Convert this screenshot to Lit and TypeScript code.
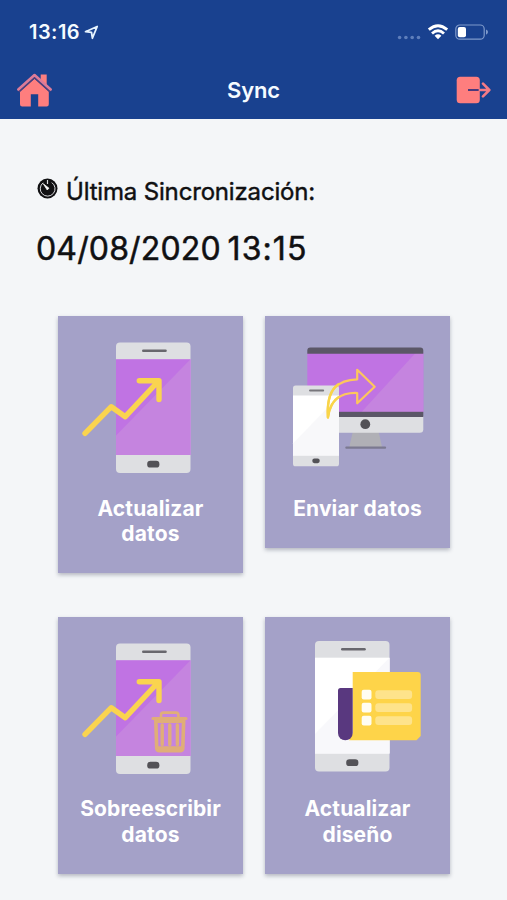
import { LitElement, html, svg, css } from "lit";
import { customElement, property } from "lit/decorators.js";

const phone = (x: number, y: number, screen: string, shade: string) => svg`
  <g transform="translate(${x} ${y})">
    <rect width="74.5" height="130.5" rx="4" fill="#dedfe2"/>
    <rect y="16.7" width="74.5" height="95.8" fill=${screen}/>
    <path d="M74.5 16.7V112.5H0V93Z" fill=${shade}/>
    <path d="M27.3 8.3H49.5" stroke="#68676d" stroke-width="2.6" stroke-linecap="round"/>
    <rect x="31.2" y="118.3" width="12.2" height="6.8" rx="3.2" fill="#535257"/>
  </g>`;

const trend = svg`
  <path d="M27 117.3L53.3 90.7L67.3 100.7L100.5 65M81.3 64.7H101V83.5" fill="none"
    stroke="#fad44f" stroke-width="5.4" stroke-linecap="round" stroke-linejoin="round"/>`;

const pictures: Record<string, unknown> = {
  update: svg`${phone(58, 26.5, "#c073e3", "#c584df")}${trend}`,
  send: svg`
    <path d="M87.7 116H113.7L117 131H84.3Z" fill="#b0b0b6"/>
    <rect x="80.3" y="130.4" width="40.8" height="2.4" rx="1" fill="#7b7990"/>
    <path d="M42.3 100H158.3V113.3Q158.3 116.8 154.8 116.8H42.3Z" fill="#dedfe2"/>
    <rect x="42.3" y="37" width="116" height="59" fill="#c073e3"/>
    <path d="M150.5 37H158.3V96H96.5Z" fill="#c584df"/>
    <path d="M42.3 37.8V34.5Q42.3 31.5 45.3 31.5H155.3Q158.3 31.5 158.3 34.5V37.8Z" fill="#5b5767"/>
    <rect x="42.3" y="95.8" width="116" height="5.2" fill="#5b5767"/>
    <circle cx="100.3" cy="108.2" r="4.9" fill="#535257"/>
    <rect x="28" y="69.5" width="46" height="80.8" rx="2.6" fill="#dedfe2"/>
    <rect x="28" y="79.5" width="46" height="60" fill="#fff"/>
    <path d="M74 80V139.5H28V127.5Z" fill="#f8f8fa"/>
    <path d="M45 74.5H58.2" stroke="#77767b" stroke-width="1.9" stroke-linecap="round"/>
    <rect x="47.3" y="142.4" width="7.4" height="4.8" rx="2.1" fill="#535257"/>
    <path d="M109.7 70.8L92.2 53.8V63.3C74 63.8 61 72 62.9 101.5C65.5 84 75 76.5 92.2 77V87.3Z"
      fill="none" stroke="#fdc65c" stroke-width="2.2" stroke-linejoin="round"/>
    <path d="M74 67.8C65 73.5 61.8 84 62.9 101.5C64.3 91.5 68 84.5 74 80.8" fill="none" stroke="#f9d548" stroke-width="2.4" stroke-linejoin="round"/>`,
  overwrite: svg`${phone(58, 26.5, "#c073e3", "#c584df")}${trend}
    <g fill="none" stroke="#e0ae78" stroke-linecap="round" stroke-linejoin="round">
      <path d="M95 101.5H128" stroke-width="3.2"/>
      <path d="M103 101V98Q103 95.6 105.4 95.6H118Q120.4 95.6 120.4 98V101" stroke-width="2.6"/>
      <path d="M97.8 103L98.7 131Q98.8 133.7 101.5 133.7H122Q124.7 133.7 124.8 131L125.7 103" stroke-width="3.6"/>
      <path d="M104.2 108V127.5M111.8 108V127.5M119.4 108V127.5" stroke-width="3.4"/>
      <path d="M99.5 104.6H124.5M100.5 130.8H123" stroke-width="3"/>
    </g>`,
  design: svg`${phone(50, 24, "#ffffff", "#f8f8fb")}
    <path d="M87.7 55H152.7Q155.7 55 155.7 58V119L151.5 123.3H84L87.7 116Z" fill="#fed449"/>
    <path d="M75.5 71H87.7V116A7.35 7.35 0 0 1 73 116V73.5Q73 71 75.5 71Z" fill="#59387f"/>
    ${[77.7, 90.7, 103.7].map(
      (y) => svg`
        <rect x="96.7" y=${y - 4.9} width="9.8" height="9.8" rx="2" fill="#fffdf2"/>
        <rect x="110.3" y=${y - 4.4} width="36.8" height="8.8" rx="3" fill="#fee38b"/>`
    )}`,
};

@customElement("sync-card")
class SyncCard extends LitElement {
  @property() picture = "update";
  @property({ attribute: false }) lines: string[] = [];

  static styles = css`
    :host {
      display: block;
      background: #a4a1c8;
      box-shadow: 0 2px 4px rgba(50, 55, 80, 0.33);
      padding-bottom: 26.3px;
    }
    svg { display: block; width: 185px; height: 179.2px; }
    .label {
      color: #fff;
      font-weight: 700;
      font-size: 21px;
      letter-spacing: 0.14px;
      line-height: 25.7px;
      text-align: center;
      white-space: nowrap;
    }
    .line { display: block; }
  `;

  render() {
    return html`
      <svg viewBox="0 0 185 179.2">${pictures[this.picture]}</svg>
      <div class="label">${this.lines.map((l) => html`<span class="line">${l}</span>`)}</div>
    `;
  }
}

@customElement("app-root")
class AppRoot extends LitElement {
  static styles = css`
    :host {
      display: block;
      box-sizing: border-box;
      height: 900px;
      overflow: hidden;
      background: #f4f6f8;
      color: #101012;
      font-family: Inter, "Liberation Sans", sans-serif;
    }
    .top { height: 119.3px; background: #19418f; color: #f5fbff; }
    .status {
      display: flex;
      align-items: center;
      box-sizing: border-box;
      height: 61px;
      padding: 3px 18px 0 29px;
    }
    .time { font-size: 20px; font-weight: 600; letter-spacing: 0.45px; }
    .loc { margin-left: 4px; }
    .signals { margin-left: auto; }
    .bar {
      display: grid;
      grid-template-columns: 1fr auto 1fr;
      align-items: center;
      height: 58px;
      padding: 0 16px;
    }
    .title { font-size: 22px; font-weight: 600; letter-spacing: -0.1px; }
    .exit { justify-self: end; }
    svg { display: block; }
    .info { padding: 56.5px 36px 0; }
    .last { display: flex; align-items: center; height: 32px; font-size: 24px; letter-spacing: -0.17px; white-space: nowrap; }
    .last svg { margin: -7px 8px 0 1px; }
    .last span { -webkit-text-stroke: 0.45px; }
    .date { height: 44px; line-height: 44px; margin-top: 19.5px; font-size: 32px; letter-spacing: 0.15px; word-spacing: -2.4px; white-space: nowrap; -webkit-text-stroke: 0.5px; }
    .hour { letter-spacing: 1.1px; }
    .grid {
      display: grid;
      grid-template-columns: 185px 185px;
      column-gap: 22px;
      row-gap: 43.9px;
      align-items: start;
      padding: 45.2px 0 0 58px;
    }
  `;

  render() {
    return html`
      <div class="top">
        <div class="status">
          <span class="time">13:16</span>
          <svg class="loc" width="15" height="15" viewBox="0 0 15 15">
            <path d="M13.2 1.5L8.4 13.2L7.5 7.4L1.5 6.7Z" fill="none" stroke="#e6f3ff" stroke-width="1.8" stroke-linejoin="round"/>
          </svg>
          <svg class="signals" width="92" height="18" viewBox="0 0 92 18">
            <g fill="#5e7ebb">
              <circle cx="2.6" cy="14.5" r="1.8"/><circle cx="8.9" cy="14.5" r="1.8"/>
              <circle cx="15.2" cy="14.5" r="1.8"/><circle cx="21.5" cy="14.5" r="1.8"/>
            </g>
            <g fill="none" stroke="#fff" stroke-width="2.9">
              <path d="M31.8 6.7Q41 -1.1 50.2 6.7"/>
              <path d="M35 10.5Q41 5.2 47 10.5"/>
            </g>
            <path d="M37.6 12.7Q41 9.9 44.4 12.7L41 16.3Z" fill="#fff"/>
            <rect x="58.8" y="2" width="28.4" height="14.2" rx="4" fill="none" stroke="#7f9acb" stroke-width="1.2"/>
            <rect x="60.8" y="4" width="8.2" height="10.2" rx="2" fill="#fff"/>
            <path d="M89 6.5Q91 7.2 91 9.1T89 11.7Z" fill="#7f9acb"/>
          </svg>
        </div>
        <div class="bar">
          <svg width="37" height="36" viewBox="0 0 37 36">
            <path d="M24.7 2.6H30.7V14L24.7 8.4Z" fill="#fb7f80"/>
            <path d="M18.5 6.8L32.8 19.5V32.3Q32.8 34.5 30.6 34.5H22.2V22.2H14.8V34.5H6.2Q4 34.5 4 32.3V19.5Z" fill="#fe7e7e"/>
            <path d="M2.8 19.8L18.5 5.6L34.2 19.8" fill="none" stroke="#4b3f7c" stroke-width="1.8"/>
            <path d="M2.3 17.5L18.5 3L34.7 17.5" fill="none" stroke="#dd7b98" stroke-width="2.6" stroke-linecap="round" stroke-linejoin="round"/>
          </svg>
          <span class="title">Sync</span>
          <svg class="exit" width="35" height="28" viewBox="0 0 35 28">
            <rect x="0.7" y="0.8" width="23.1" height="26.4" rx="3.5" fill="#fe7e7e"/>
            <path d="M12 14H24" stroke="#4a397c" stroke-width="2"/>
            <path d="M23.8 14H33M27 7.6L33.3 14L27 20.4" fill="none" stroke="#f47b86" stroke-width="2.6" stroke-linecap="round" stroke-linejoin="round"/>
          </svg>
        </div>
      </div>
      <div class="info">
        <div class="last">
          <svg width="21" height="21" viewBox="0 0 21 21">
            <circle cx="10.5" cy="10.5" r="10" fill="#101012"/>
            <path d="M6.2 4.8A7.4 7.4 0 1 0 14.8 4.6" fill="none" stroke="#d9dadd" stroke-width="1"/>
            <path d="M10.5 2V6" stroke="#d9dadd" stroke-width="1.2"/>
            <path d="M6.3 5.8L12 10.2L10.2 12Z" fill="#fff" stroke="#fff" stroke-width="0.7" stroke-linejoin="round"/>
          </svg>
          <span>Última Sincronización:</span>
        </div>
        <div class="date">04/08/2020 <span class="hour">13:15</span></div>
      </div>
      <div class="grid">
        <sync-card picture="update" .lines=${["Actualizar", "datos"]}></sync-card>
        <sync-card picture="send" .lines=${["Enviar datos"]}></sync-card>
        <sync-card picture="overwrite" .lines=${["Sobreescribir", "datos"]}></sync-card>
        <sync-card picture="design" .lines=${["Actualizar", "diseño"]}></sync-card>
      </div>
    `;
  }
}
